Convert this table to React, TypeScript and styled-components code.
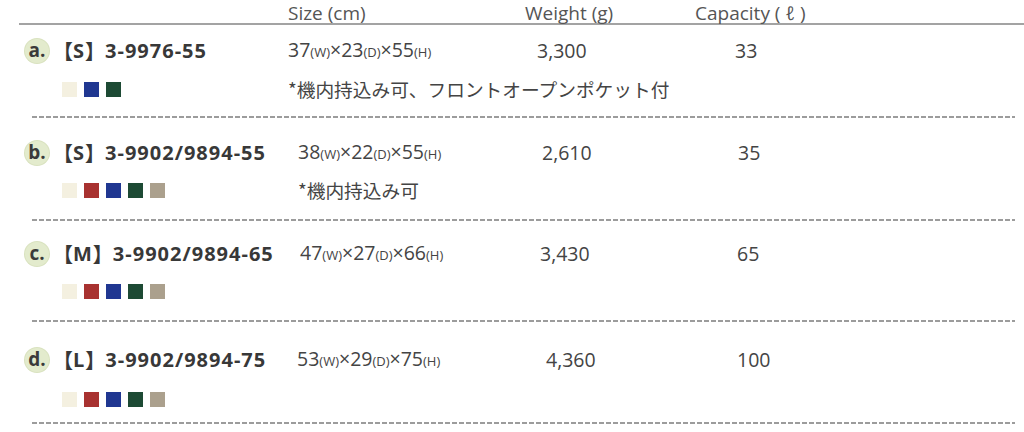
import React from "react";
import styled, { createGlobalStyle } from "styled-components";

const Global = createGlobalStyle`
  html, body { margin: 0; padding: 0; background: #ffffff; }
  body { font-family: "Open Sans", "Noto Sans CJK JP", sans-serif; color: #444; }
`;

const Page = styled.div`
  width: 1024px;
  height: 432px;
  overflow: hidden;
  background: #fff;
`;

const Header = styled.div`
  margin-left: 19px;
  height: 23px;
  display: grid;
  grid-template-columns: 269px 237px 170px auto;
  align-items: start;
  border-bottom: 2px solid #a3a3a3;
`;

const HeadCell = styled.div`
  font-size: 19px;
  line-height: 26px;
  height: 23px;
  color: #555;
  white-space: nowrap;
`;

const Row = styled.div<{ $pt: number; $pb: number; $gap: number; $cols: string }>`
  margin-left: 25px;
  padding-top: ${(p) => p.$pt}px;
  padding-bottom: ${(p) => p.$pb}px;
  display: grid;
  grid-template-columns: ${(p) => p.$cols};
  grid-template-rows: 24px 24px;
  row-gap: ${(p) => p.$gap}px;
  align-items: center;
`;

const Divider = styled.div`
  margin-left: 32px;
  width: 983px;
  height: 2px;
  background: repeating-linear-gradient(
    to right,
    #9c9c9c 0,
    #9c9c9c 5px,
    transparent 5px,
    transparent 7px
  );
`;

const TitleCell = styled.div`
  display: flex;
  align-items: center;
  gap: 14px;
  white-space: nowrap;
`;

const Badge = styled.div`
  width: 24px;
  height: 24px;
  flex: none;
  border-radius: 50%;
  background: #e3ebcd;
  box-shadow: 0 0 0 1px #d9e2bf;
  display: flex;
  align-items: center;
  justify-content: center;
  font-size: 19px;
  font-weight: 700;
  color: #3a3a3a;
  line-height: 1;
  padding-bottom: 1px;
  box-sizing: border-box;
`;

const Title = styled.div`
  display: flex;
  align-items: center;
  font-size: 20px;
  font-weight: 700;
  color: #383838;
  line-height: 24px;
  letter-spacing: 1px;
`;

const Bracket = styled.span<{ $side: "open" | "close" }>`
  font-family: "Noto Sans CJK JP", sans-serif;
  font-feature-settings: "halt" 1;
  font-weight: 700;
  letter-spacing: 0;
  margin-right: ${(p) => (p.$side === "close" ? "10px" : "0")};
`;

const Value = styled.div`
  font-size: 19.5px;
  line-height: 24px;
  color: #444;
  white-space: nowrap;
`;

const Dim = styled.span`
  font-size: 13px;
`;

const Swatches = styled.div`
  display: flex;
  gap: 7px;
  padding-left: 37px;
`;

const Swatch = styled.div<{ $c: string }>`
  width: 15px;
  height: 15px;
  background: ${(p) => p.$c};
`;

const Note = styled.div`
  grid-column: 2 / 5;
  font-family: "Noto Sans CJK JP", sans-serif;
  font-size: 18.7px;
  line-height: 24px;
  color: #444;
  white-space: nowrap;
`;

const COLORS: Record<string, string> = {
  cream: "#f4f0e0",
  red: "#a83230",
  blue: "#203791",
  green: "#1d4a34",
  taupe: "#aba08d",
};

type Item = {
  key: string;
  size: string;
  code: string;
  dims: [string, string, string];
  weight: string;
  capacity: string;
  colors: string[];
  note?: string;
  pt: number;
  pb: number;
  gap: number;
  cols: string;
};

const ITEMS: Item[] = [
  {
    key: "a.",
    size: "S",
    code: "3-9976-55",
    dims: ["37", "23", "55"],
    weight: "3,300",
    capacity: "33",
    colors: ["cream", "blue", "green"],
    note: "*機内持込み可、フロントオープンポケット付",
    pt: 14,
    pb: 15,
    gap: 14,
    cols: "263px 249px 198px auto",
  },
  {
    key: "b.",
    size: "S",
    code: "3-9902/9894-55",
    dims: ["38", "22", "55"],
    weight: "2,610",
    capacity: "35",
    colors: ["cream", "red", "blue", "green", "taupe"],
    note: "*機内持込み可",
    pt: 23,
    pb: 17,
    gap: 13,
    cols: "273px 244px 196px auto",
  },
  {
    key: "c.",
    size: "M",
    code: "3-9902/9894-65",
    dims: ["47", "27", "66"],
    weight: "3,430",
    capacity: "65",
    colors: ["cream", "red", "blue", "green", "taupe"],
    pt: 21,
    pb: 17,
    gap: 13,
    cols: "275px 240px 197px auto",
  },
  {
    key: "d.",
    size: "L",
    code: "3-9902/9894-75",
    dims: ["53", "29", "75"],
    weight: "4,360",
    capacity: "100",
    colors: ["cream", "red", "blue", "green", "taupe"],
    pt: 26,
    pb: 11,
    gap: 15,
    cols: "272px 249px 191px auto",
  },
];

export default function App() {
  return (
    <Page>
      <Global />
      <Header>
        <span />
        <HeadCell>Size (cm)</HeadCell>
        <HeadCell>Weight (g)</HeadCell>
        <HeadCell>Capacity ( ℓ )</HeadCell>
      </Header>
      {ITEMS.map((it) => (
        <React.Fragment key={it.key}>
          <Row $pt={it.pt} $pb={it.pb} $gap={it.gap} $cols={it.cols}>
            <TitleCell>
              <Badge>{it.key}</Badge>
              <Title>
                <Bracket $side="open">【</Bracket>
                <span>{it.size}</span>
                <Bracket $side="close">】</Bracket>
                <span>{it.code}</span>
              </Title>
            </TitleCell>
            <Value>
              {it.dims[0]}
              <Dim>(W)</Dim>×{it.dims[1]}
              <Dim>(D)</Dim>×{it.dims[2]}
              <Dim>(H)</Dim>
            </Value>
            <Value>{it.weight}</Value>
            <Value>{it.capacity}</Value>
            <Swatches>
              {it.colors.map((c, i) => (
                <Swatch key={i} $c={COLORS[c]} />
              ))}
            </Swatches>
            {it.note ? <Note>{it.note}</Note> : <span />}
          </Row>
          <Divider />
        </React.Fragment>
      ))}
    </Page>
  );
}
